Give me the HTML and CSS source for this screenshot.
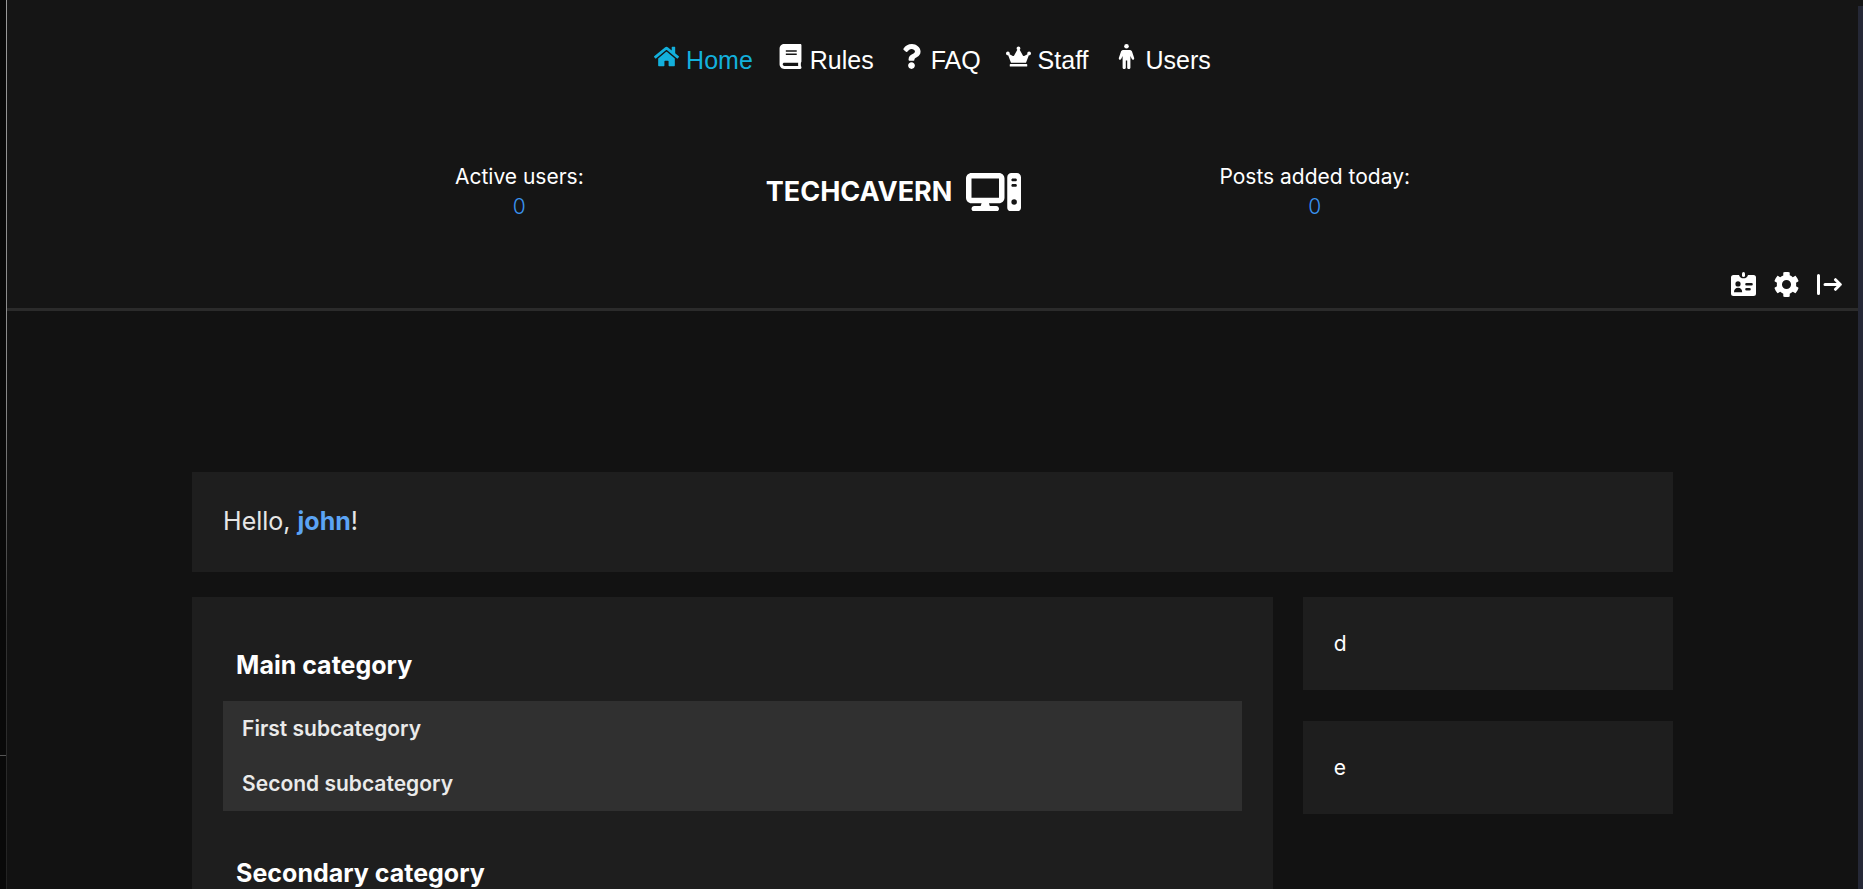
FILE: index.html
```html
<!DOCTYPE html>
<html lang="en">
<head>
<meta charset="utf-8">
<title>TechCavern</title>
<link rel="stylesheet" href="styles.css">
</head>
<body>
<div class="gutter"><div class="gutter-mark"></div></div>
<div class="page">
  <header class="header">
    <nav class="nav">
      <a class="nav-link active" href="#"><svg class="icon" viewBox="0 0 576 512"><path d="M280.37 148.26L96 300.11V464a16 16 0 0 0 16 16l112.06-.29a16 16 0 0 0 15.92-16V368a16 16 0 0 1 16-16h64a16 16 0 0 1 16 16v95.64a16 16 0 0 0 16 16.05L464 480a16 16 0 0 0 16-16V300L295.67 148.26a12.19 12.19 0 0 0-15.3 0zM571.6 251.47L488 182.56V44.05a12 12 0 0 0-12-12h-56a12 12 0 0 0-12 12v72.61L318.47 43a48 48 0 0 0-61 0L4.34 251.47a12 12 0 0 0-1.6 16.9l25.5 31A12 12 0 0 0 45.15 301l235.22-193.74a12.19 12.19 0 0 1 15.3 0L530.9 301a12 12 0 0 0 16.9-1.6l25.5-31a12 12 0 0 0-1.7-16.93z"/></svg> Home</a>
      <a class="nav-link" href="#"><svg class="icon" viewBox="0 0 448 512"><path d="M448 360V24c0-13.3-10.7-24-24-24H96C43 0 0 43 0 96v320c0 53 43 96 96 96h328c13.3 0 24-10.7 24-24v-16c0-7.5-3.5-14.3-8.9-18.7-4.2-15.4-4.2-59.3 0-74.7 5.4-4.3 8.9-11.1 8.9-18.6zM128 134c0-3.3 2.7-6 6-6h212c3.3 0 6 2.7 6 6v20c0 3.3-2.7 6-6 6H134c-3.3 0-6-2.7-6-6v-20zm0 64c0-3.3 2.7-6 6-6h212c3.3 0 6 2.7 6 6v20c0 3.3-2.7 6-6 6H134c-3.3 0-6-2.7-6-6v-20zm253.4 250H96c-17.7 0-32-14.3-32-32 0-17.6 14.4-32 32-32h285.4c-1.9 17.1-1.9 46.9 0 64z"/></svg> Rules</a>
      <a class="nav-link" href="#"><svg class="icon" viewBox="0 0 384 512"><path d="M202.021 0C122.202 0 70.503 32.703 29.914 91.026c-7.363 10.58-5.093 25.086 5.178 32.874l43.138 32.709c10.373 7.865 25.132 6.026 33.253-4.148 25.049-31.381 43.63-49.449 82.757-49.449 30.764 0 68.816 19.799 68.816 49.631 0 22.552-18.617 34.134-48.993 51.164-35.423 19.86-82.299 44.576-82.299 106.405V320c0 13.255 10.745 24 24 24h72.471c13.255 0 24-10.745 24-24v-5.773c0-42.86 125.268-44.645 125.268-160.627C377.504 66.256 286.902 0 202.021 0zM192 373.459c-38.196 0-69.271 31.075-69.271 69.271 0 38.195 31.075 69.27 69.271 69.27s69.271-31.075 69.271-69.271-31.075-69.27-69.271-69.27z"/></svg> FAQ</a>
      <a class="nav-link" href="#"><svg class="icon" viewBox="0 0 640 512"><path d="M528 448H112c-8.800 0-16 7.200-16 16v32c0 8.800 7.200 16 16 16h416c8.800 0 16-7.200 16-16v-32c0-8.800-7.200-16-16-16zm64-320c-26.500 0-48 21.500-48 48 0 7.100 1.600 13.700 4.400 19.800L476 239.200c-15.400 9.200-35.300 4-44.200-11.600L350.300 85C361 76.200 368 63 368 48c0-26.500-21.500-48-48-48s-48 21.500-48 48c0 15 7 28.200 17.700 37l-81.500 142.600c-8.900 15.600-28.900 20.800-44.200 11.600l-72.300-43.400c2.700-6 4.400-12.700 4.400-19.800 0-26.500-21.500-48-48-48S0 149.500 0 176s21.500 48 48 48c2.600 0 5.200-.4 7.700-.8L128 416h384l72.300-192.800c2.500.4 5.100.8 7.700.8 26.500 0 48-21.500 48-48s-21.500-48-48-48z"/></svg> Staff</a>
      <a class="nav-link" href="#"><svg class="icon" viewBox="0 0 25 25"><circle cx="12.500" cy="2.300" r="2.300"/><path d="M9.500 6h6c1.200 0 2 .5 2.500 1.500l2.100 6.300c.6 1.900-1.700 2.700-2.400 1L16.400 12v11.700c0 1.700-3.200 1.700-3.200 0V16.500h-1.400v7.200c0 1.700-3.200 1.700-3.200 0V12l-1.300 2.800c-.7 1.700-3 .9-2.400-1L7 7.500C7.500 6.500 8.300 6 9.500 6z"/></svg> Users</a>
    </nav>
    <div class="stats">
      <div class="stat"><span>Active users:</span><span class="stat-value">0</span></div>
      <h1 class="brand">TECHCAVERN
        <svg class="brand-icon" viewBox="0 32 640 448"><path d="M384 96V320H64L64 96H384zM64 32C28.700 32 0 60.700 0 96V320c0 35.300 28.700 64 64 64H181.300l-10.700 32H96c-17.700 0-32 14.300-32 32s14.300 32 32 32H352c17.700 0 32-14.300 32-32s-14.300-32-32-32H277.300l-10.700-32H384c35.300 0 64-28.700 64-64V96c0-35.300-28.700-64-64-64H64zm464 0c-26.500 0-48 21.500-48 48V432c0 26.500 21.500 48 48 48h64c26.500 0 48-21.500 48-48V80c0-26.500-21.500-48-48-48H528zm16 64h32c8.800 0 16 7.200 16 16s-7.200 16-16 16H544c-8.800 0-16-7.200-16-16s7.200-16 16-16zm-16 80c0-8.800 7.200-16 16-16h32c8.800 0 16 7.200 16 16s-7.200 16-16 16H544c-8.800 0-16-7.200-16-16zm32 160a32 32 0 1 1 0 64 32 32 0 1 1 0-64z"/></svg>
      </h1>
      <div class="stat"><span>Posts added today:</span><span class="stat-value">0</span></div>
    </div>
    <div class="actions">
      <button class="action" aria-label="Profile"><svg class="icon" viewBox="0 0 25 25"><path fill-rule="evenodd" d="M2.500 3H8a4.700 4.700 0 0 0 9 0h5.500A2.500 2.500 0 0 1 25 5.500v16a2.500 2.500 0 0 1-2.500 2.500h-20A2.500 2.500 0 0 1 0 21.500v-16A2.500 2.500 0 0 1 2.500 3zM7 9.300a2.600 2.600 0 1 0 0 5.200 2.600 2.600 0 0 0 0-5.200zM3 20.300h8.200c0-3-1.600-4.600-4.100-4.600S3 17.300 3 20.300zM15.500 11a1.300 1.300 0 0 0 0 2.600h5a1.300 1.300 0 0 0 0-2.600zM15.500 16a1.300 1.300 0 0 0 0 2.600h3a1.300 1.300 0 0 0 0-2.600z"/><rect x="11" y="0" width="3" height="5" rx="1.500"/></svg></button>
      <button class="action" aria-label="Settings"><svg class="icon" viewBox="8 8 496 496"><path d="M487.400 315.700l-42.600-24.600c4.300-23.200 4.300-47 0-70.200l42.600-24.600c4.900-2.800 7.100-8.600 5.500-14-11.100-35.600-30-67.800-54.700-94.600-3.800-4.100-10-5.100-14.800-2.300L380.800 110c-17.900-15.400-38.500-27.300-60.800-35.100V25.800c0-5.600-3.900-10.500-9.400-11.700-36.700-8.200-74.300-7.800-109.200 0-5.500 1.200-9.400 6.100-9.400 11.700V75c-22.200 7.900-42.800 19.800-60.800 35.100L88.700 85.500c-4.900-2.800-11-1.900-14.800 2.300-24.700 26.700-43.600 58.900-54.700 94.600-1.700 5.400.6 11.200 5.500 14L67.300 221c-4.300 23.200-4.300 47 0 70.200l-42.600 24.600c-4.900 2.800-7.100 8.600-5.500 14 11.100 35.600 30 67.800 54.700 94.600 3.800 4.100 10 5.100 14.800 2.300l42.600-24.600c17.900 15.400 38.500 27.300 60.800 35.100v49.200c0 5.600 3.900 10.500 9.400 11.700 36.700 8.200 74.300 7.800 109.200 0 5.500-1.200 9.400-6.100 9.400-11.700v-49.200c22.200-7.900 42.800-19.800 60.800-35.100l42.600 24.600c4.900 2.800 11 1.900 14.800-2.300 24.700-26.700 43.600-58.900 54.700-94.600 1.500-5.500-.7-11.300-5.600-14.100zM256 346a90 90 0 1 1 0-180 90 90 0 0 1 0 180z"/></svg></button>
      <button class="action" aria-label="Log out"><svg class="icon line" viewBox="0 0 25 25"><path d="M1.500 3.500v18M8 12.500h15M18.500 7.700l4.800 4.800-4.800 4.800"/></svg></button>
    </div>
  </header>
  <main class="content">
    <section class="card greeting">Hello, <a class="user" href="#">john</a>!</section>
    <div class="columns">
      <section class="card forum">
        <h2 class="category">Main category</h2>
        <ul class="subs">
          <li><a class="sub" href="#">First subcategory</a></li>
          <li><a class="sub" href="#">Second subcategory</a></li>
        </ul>
        <h2 class="category">Secondary category</h2>
      </section>
      <aside class="side">
        <div class="card">d</div>
        <div class="card">e</div>
      </aside>
    </div>
  </main>
</div>
<div class="track"></div>
</body>
</html>
```
FILE: styles.css
```css
* { box-sizing: border-box; }
body {
  margin: 0;
  height: 100vh;
  overflow: hidden;
  display: flex;
  background: #121212;
  color: #fff;
  font: 21px/30px Inter, "Open Sans", sans-serif;
}
a { color: inherit; text-decoration: none; }
.gutter {
  width: 7px;
  padding-top: 755px;
  background: #090909;
  border-right: 1px solid #3a3a3a;
  border-image: linear-gradient(#999 0, #888 45%, #333 70%, #222) 1;
}
.gutter-mark { height: 1px; background: #555; }
.page { flex: 1; min-width: 0; }
.track { width: 5px; background: #252836; border-top: 6px solid #151515; }
.header {
  background: #151515;
  border-bottom: 3px solid #2b2b2b;
  padding: 40px 16px 11px;
}
.icon { width: 25px; height: 25px; fill: currentColor; }
.nav {
  display: flex;
  justify-content: center;
  gap: 25px;
  font: 25px/40px "Liberation Sans", sans-serif;
}
.active { color: #13b0dc; }
.stats {
  display: flex;
  justify-content: center;
  gap: 182px;
  margin-top: 82px;
  align-items: center;
}
.stat { display: flex; flex-direction: column; align-items: center; }
.stat-value { color: #3a93f0; font-weight: 300; }
.brand {
  display: flex;
  align-items: center;
  gap: 14px;
  margin: 0 16px 0 0;
  font-size: 27px;
  font-weight: 700;
}
.brand-icon { width: 55px; flex: none; fill: currentColor; }
.actions {
  display: flex;
  justify-content: flex-end;
  gap: 18px;
  margin-top: 50px;
}
.action { display: flex; padding: 0; border: 0; background: none; color: #fff; }
.line { fill: none; stroke: currentColor; stroke-width: 3; stroke-linecap: round; stroke-linejoin: round; }
.content { width: 80%; margin: 161px auto 0; }
.card { background: #1e1e1e; padding: 32px 31px 31px; }
.greeting {
  padding: 31px 31px 33px;
  font-size: 25px;
  line-height: 36px;
  color: #e6e6e6;
  margin-bottom: 25px;
}
.user { color: #5ba4f5; font-weight: 700; }
.columns { display: flex; justify-content: space-between; align-items: flex-start; }
.forum { width: 73%; }
.side { width: 25%; display: flex; flex-direction: column; gap: 31px; }
.category { margin: 18px 13px; font-size: 25px; line-height: 36px; font-weight: 700; }
.subs { list-style: none; margin: 0 0 44px; padding: 0; background: #303030; }
.sub {
  display: block;
  padding: 13px 19px 12px;
  font-weight: 600;
  color: #eaeaea;
}
```
